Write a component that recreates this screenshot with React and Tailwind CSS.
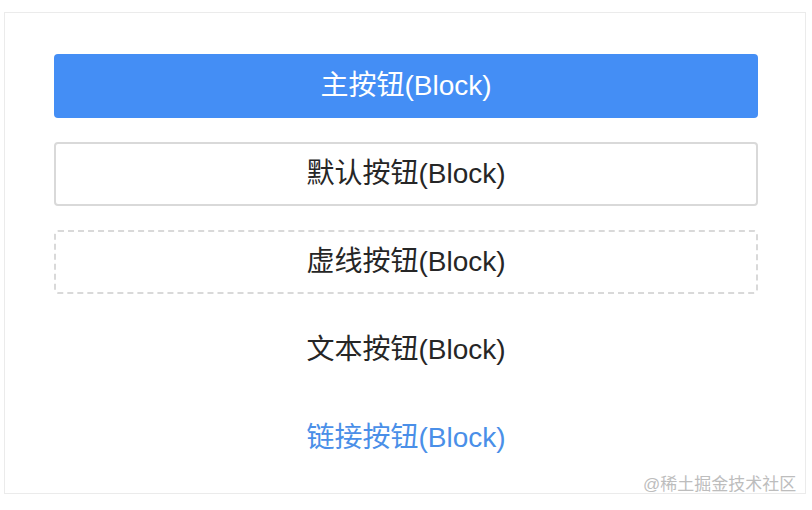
const FONT = { fontFamily: '"Liberation Sans", "Noto Sans CJK SC", sans-serif' };

export default function App() {
  return (
    <div className="relative w-[812px] h-[510px] bg-white overflow-hidden" style={FONT}>
      <div className="ml-[4px] mt-[12px] w-[802px] h-[482px] border border-[#ebebeb] pt-[41px] pl-[49px] pr-[47px]">
        <div className="flex flex-col gap-[24px] text-[28px] leading-none">
          <button className="h-[64px] w-full rounded-[4px] bg-[#448ef5] text-white flex items-center justify-center">
            主按钮(Block)
          </button>
          <button className="h-[64px] w-full rounded-[4px] border-2 border-[#d9d9d9] bg-white text-[#262626] flex items-center justify-center">
            默认按钮(Block)
          </button>
          <button className="h-[64px] w-full rounded-[4px] border-2 border-dashed border-[#d9d9d9] bg-white text-[#262626] flex items-center justify-center">
            虚线按钮(Block)
          </button>
          <button className="h-[64px] w-full text-[#262626] flex items-center justify-center">
            文本按钮(Block)
          </button>
          <button className="h-[64px] w-full text-[#4a8fe8] flex items-center justify-center">
            链接按钮(Block)
          </button>
        </div>
      </div>
      <div className="absolute left-[643px] top-[474px] text-[17px] leading-[22px] text-[#bdbdbd]">
        @稀土掘金技术社区
      </div>
    </div>
  );
}
